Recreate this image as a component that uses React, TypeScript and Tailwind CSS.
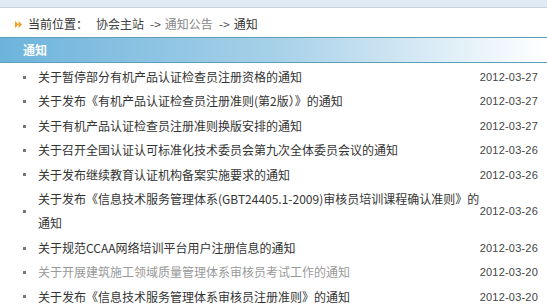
import React from "react";

const items: { t: React.ReactNode; d: string; muted?: boolean }[] = [
  { t: "关于暂停部分有机产品认证检查员注册资格的通知", d: "2012-03-27" },
  { t: "关于发布《有机产品认证检查员注册准则(第2版）》的通知", d: "2012-03-27" },
  { t: "关于有机产品认证检查员注册准则换版安排的通知", d: "2012-03-27" },
  { t: "关于召开全国认证认可标准化技术委员会第九次全体委员会议的通知", d: "2012-03-26" },
  { t: "关于发布继续教育认证机构备案实施要求的通知", d: "2012-03-26" },
  {
    t: (
      <>
        关于发布《信息技术服务管理体系(GBT24405.1-2009)审核员培训课程确认准则》的
        <br />
        通知
      </>
    ),
    d: "2012-03-26",
  },
  { t: "关于规范CCAA网络培训平台用户注册信息的通知", d: "2012-03-26" },
  { t: "关于开展建筑施工领域质量管理体系审核员考试工作的通知", d: "2012-03-20", muted: true },
  { t: "关于发布《信息技术服务管理体系审核员注册准则》的通知", d: "2012-03-20" },
];

export default function App() {
  return (
    <div
      className="w-[547px] h-[307px] overflow-hidden bg-white text-[12px] text-[#333]"
      style={{ fontFamily: '"Noto Sans CJK SC", "Noto Sans", sans-serif' }}
    >
      <div className="h-[8px] bg-[#dfeaf4] border-b border-[#c6d1da]" />
      <div className="h-[29px] flex items-center pt-[3px] pl-[15px]">
        <svg width="7" height="7" viewBox="0 0 7 7" className="mr-[6px]">
          <polygon points="0,0 3.5,3.5 0,7" fill="#f0a01e" />
          <polygon points="3.5,0 7,3.5 3.5,7" fill="#f0a01e" />
        </svg>
        <span className="text-[#333]">当前位置：</span>
        <span className="ml-[8px] text-[#444]">协会主站</span>
        <span className="ml-[6px] text-[#555]">-&gt;</span>
        <span className="ml-[4px] text-[#888]">通知公告</span>
        <span className="ml-[6px] text-[#555]">-&gt;</span>
        <span className="ml-[4px] text-[#333]">通知</span>
      </div>
      <div className="h-[26px] border-y border-[#5f9db5] bg-gradient-to-r from-[#6cb4dc] via-[#a6d0e8] via-50% to-white flex items-center pl-[23px]">
        <span className="font-bold text-white">通知</span>
      </div>
      <div className="pt-[2px]">
        {items.map((it, i) => (
          <div key={i} className="flex items-center leading-[24.4px]">
            <div className="w-[38px] shrink-0 flex">
              <div className="ml-[23px] w-[3px] h-[3px] bg-[#777]" />
            </div>
            <div className={`flex-1 min-w-0 whitespace-nowrap ${it.muted ? "text-[#999]" : "text-[#333]"}`}>{it.t}</div>
            <div
              className="w-[70px] shrink-0 text-right pr-[9px] text-[11px] text-[#444] tracking-[0.2px] whitespace-nowrap"
              style={{ fontFamily: '"Liberation Sans", sans-serif' }}
            >
              {it.d}
            </div>
          </div>
        ))}
      </div>
    </div>
  );
}
